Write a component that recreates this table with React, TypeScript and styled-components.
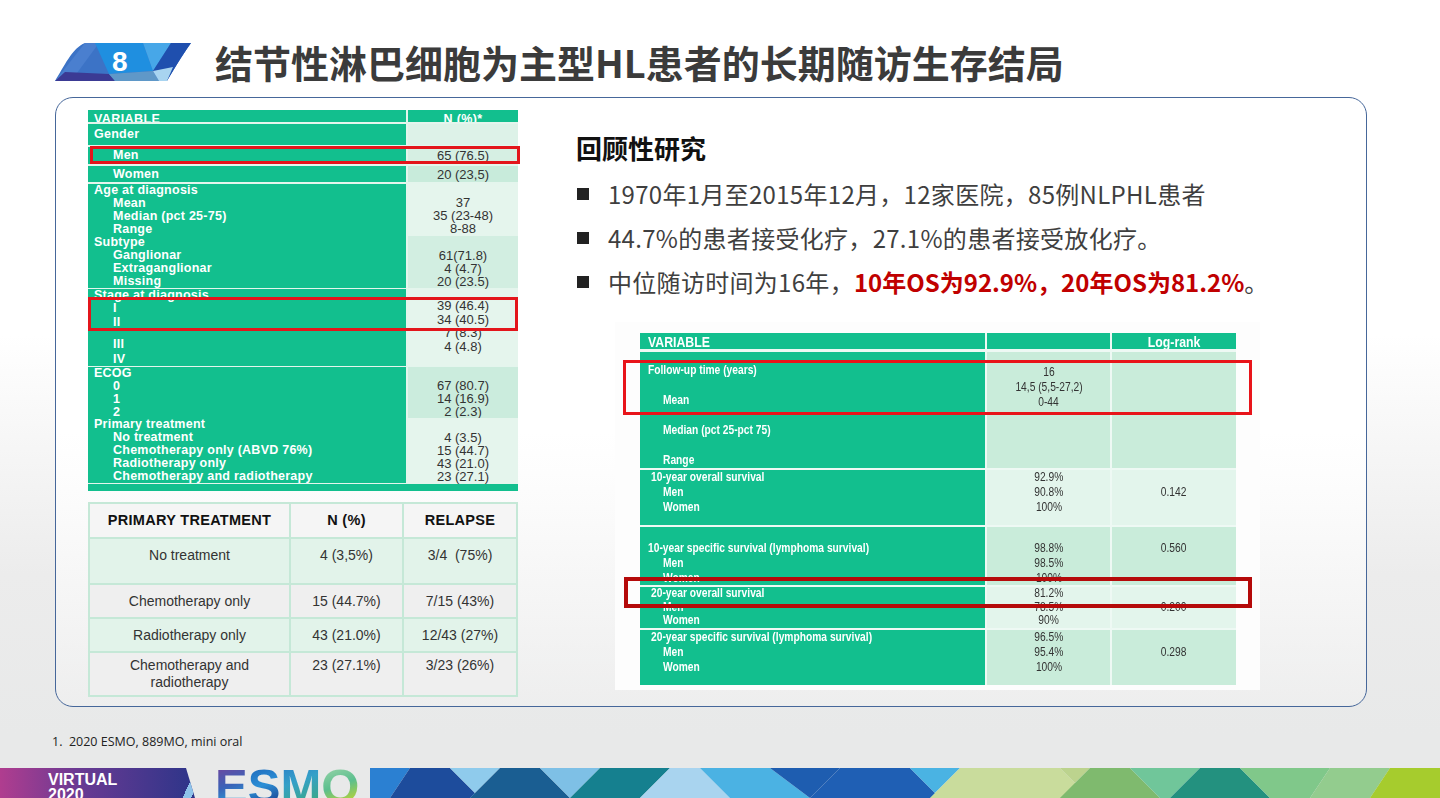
import React from "react";
import styled, { createGlobalStyle } from "styled-components";

const cjk = `"Noto Sans CJK SC", "Noto Sans", sans-serif`;
const arial = `"Liberation Sans", Arial, sans-serif`;
const green = "#12bf8e";

const GlobalStyle = createGlobalStyle`
  html, body { margin: 0; padding: 0; }
  body { font-family: ${cjk}; }
`;

const Page = styled.div`
  width: 1440px;
  height: 798px;
  overflow: hidden;
  display: flex;
  flex-direction: column;
  background: linear-gradient(180deg, #ffffff 0%, #ffffff 42%, #ececec 72%, #e8e9e9 92%);
`;

/* ---------- header ---------- */

const Header = styled.header`
  display: flex;
  align-items: center;
  gap: 23px;
  height: 97px;
  box-sizing: border-box;
  padding: 26px 0 0 55px;
`;

const Badge = styled.div`
  position: relative;
  width: 137px;
  height: 38px;
  display: flex;
  align-items: center;
`;

const BadgeArt = styled.svg`
  position: absolute;
  inset: 0;
`;

const BadgeNum = styled.span`
  position: relative;
  margin-left: 57px;
  font: bold 28px/1 ${arial};
  color: #fff;
`;

const Title = styled.h1`
  margin: 0;
  font: bold 38px/1 ${cjk};
  color: #3b3b3b;
`;

/* ---------- card ---------- */

const Card = styled.section`
  margin-left: 55px;
  width: 1312px;
  height: 610px;
  box-sizing: border-box;
  border: 1px solid #46679a;
  border-radius: 18px;
  background: linear-gradient(180deg, #ffffff 0%, #ffffff 55%, rgba(240, 240, 240, 0.7) 100%);
  display: flex;
  padding: 12px 0 0 32px;
`;

const LeftCol = styled.div`
  width: 430px;
  display: flex;
  flex-direction: column;
  gap: 11px;
`;

/* left stats table */

const StatTable = styled.div`
  position: relative;
  width: 430px;
  display: flex;
  flex-direction: column;
  gap: 2px;
  background: #e4f5ed;
`;

const StatRow = styled.div<{ $h: number; $clip?: boolean }>`
  display: grid;
  grid-template-columns: 318px 110px;
  column-gap: 2px;
  height: ${(p) => p.$h}px;
  overflow: ${(p) => (p.$clip ? "hidden" : "visible")};
`;

const StatHeadCell = styled.div<{ $center?: boolean }>`
  background: ${green};
  color: #fff;
  font: bold 12.5px/15px ${arial};
  letter-spacing: 0.4px;
  padding: 2px 0 0 ${(p) => (p.$center ? 0 : 6)}px;
  text-align: ${(p) => (p.$center ? "center" : "left")};
`;

const StatLabelCell = styled.div<{ $pad: number }>`
  background: ${green};
  color: #fff;
  font: bold 12.5px ${arial};
  letter-spacing: 0.25px;
  padding: ${(p) => p.$pad}px 0 0 6px;
`;

const StatValueCell = styled.div<{ $bg: string; $pad: number }>`
  background: ${(p) => p.$bg};
  color: #333;
  font: 13px ${arial};
  text-align: center;
  padding-top: ${(p) => p.$pad}px;
`;

const StatLine = styled.div<{ $ind?: number; $mt?: number }>`
  line-height: 13px;
  height: 13px;
  white-space: nowrap;
  padding-left: ${(p) => p.$ind || 0}px;
  margin-top: ${(p) => p.$mt || 0}px;
`;

const StatFoot = styled.div`
  height: 7px;
  background: ${green};
`;

const Highlight = styled.div<{ $top: number; $left: number; $w: number; $h: number; $c: string; $bw: number }>`
  position: absolute;
  top: ${(p) => p.$top}px;
  left: ${(p) => p.$left}px;
  width: ${(p) => p.$w}px;
  height: ${(p) => p.$h}px;
  box-sizing: border-box;
  border: ${(p) => p.$bw}px solid ${(p) => p.$c};
  pointer-events: none;
`;

/* treatment table */

const TreatTable = styled.div`
  display: grid;
  grid-template-columns: 199px 111px 112px;
  gap: 2px;
  padding: 2px;
  background: #c5e8d7;
`;

const TreatCell = styled.div<{ $bg: string; $h: number; $top?: number; $head?: boolean }>`
  height: ${(p) => p.$h}px;
  box-sizing: border-box;
  background: ${(p) => p.$bg};
  display: flex;
  flex-direction: column;
  align-items: center;
  justify-content: ${(p) => (p.$top !== undefined ? "flex-start" : "center")};
  padding-top: ${(p) => p.$top || 0}px;
  text-align: center;
  font: ${(p) => (p.$head ? "bold 14.5px" : "14px")} / 17px ${arial};
  color: ${(p) => (p.$head ? "#111" : "#333")};
  letter-spacing: ${(p) => (p.$head ? "0.3px" : "0")};
  white-space: pre;
`;

/* right column */

const RightCol = styled.div`
  margin-left: 58px;
  display: flex;
  flex-direction: column;
`;

const Heading = styled.h2`
  margin: 20px 0 0;
  font: bold 26px/36px ${cjk};
  color: #111;
`;

const Bullets = styled.ul`
  list-style: none;
  margin: 6px 0 0;
  padding: 0;
`;

const Bullet = styled.li`
  display: flex;
  align-items: center;
  height: 44px;
  font: 24px/44px ${cjk};
  letter-spacing: 0.3px;
  color: #3f3f3f;
  white-space: nowrap;
`;

const Square = styled.span`
  width: 12px;
  height: 12px;
  background: #222;
  margin: 0 19px 0 1px;
  flex: none;
`;

const Red = styled.b`
  color: #c00000;
  font-weight: bold;
  letter-spacing: 0;
`;

const Figure = styled.div`
  margin: 18px 0 0 39px;
  width: 645px;
  box-sizing: border-box;
  padding: 11px 24px 5px 25px;
  background: #fdfdfd;
`;

const SurvTable = styled.div`
  position: relative;
  width: 596px;
  display: flex;
  flex-direction: column;
  gap: 2px;
  background: #eef9f4;
`;

const SurvRow = styled.div<{ $h: number; $gapBelow?: number }>`
  display: grid;
  grid-template-columns: 345px 123px 124px;
  column-gap: 2px;
  height: ${(p) => p.$h}px;
  margin-bottom: ${(p) => p.$gapBelow || 0}px;
  overflow: hidden;
`;

const SurvHeadCell = styled.div<{ $center?: boolean }>`
  background: ${green};
  color: #fff;
  font: bold 15px/18px ${arial};
  padding-left: ${(p) => (p.$center ? 0 : 8)}px;
  text-align: ${(p) => (p.$center ? "center" : "left")};
`;

const SurvLabelCell = styled.div<{ $pad: number; $lh: number }>`
  background: ${green};
  color: #fff;
  font: bold 12.5px/${(p) => p.$lh}px ${arial};
  padding-top: ${(p) => p.$pad}px;
`;

const SurvValueCell = styled.div<{ $bg: string; $pad: number; $lh: number }>`
  background: ${(p) => p.$bg};
  color: #333;
  font: 12.5px/${(p) => p.$lh}px ${arial};
  text-align: center;
  padding-top: ${(p) => p.$pad}px;
`;

const SurvLine = styled.div<{ $ind?: number }>`
  white-space: nowrap;
  padding-left: ${(p) => p.$ind || 0}px;
  min-height: 1em;
`;

/* Arial Narrow look: squeeze regular Liberation Sans horizontally */
const Narrow = styled.span<{ $origin?: string }>`
  display: inline-block;
  transform: scaleX(0.82);
  transform-origin: ${(p) => p.$origin || "left"} center;
`;

/* footer */

const FootNote = styled.div`
  height: 61px;
  box-sizing: border-box;
  padding: 26px 0 0 52px;
  font: 12.5px/18px "Open Sans", ${arial};
  color: #222;
  white-space: pre;
`;

const Band = styled.footer`
  height: 30px;
  display: flex;
  overflow: hidden;
`;

const Virtual = styled.div`
  width: 195px;
  flex: none;
  box-sizing: border-box;
  padding: 4px 0 0 48px;
  background:
    linear-gradient(115deg, transparent 0 178px, #8fc3ea 178px 186px, transparent 186px),
    linear-gradient(90deg, #b03d8f 0%, #6a3a93 40%, #2d3589 100%);
  clip-path: polygon(0 0, 186px 0, 195px 100%, 0 100%);
  color: #fff;
  font: bold 16px/15px ${arial};
`;

const Logo = styled.div`
  width: 175px;
  flex: none;
  display: flex;
  padding-left: 20px;
  box-sizing: border-box;
  font: bold 49px/1 ${arial};
  margin-top: -6px;
`;

const LogoLetter = styled.span<{ $g: string }>`
  background: ${(p) => p.$g};
  -webkit-background-clip: text;
  background-clip: text;
  color: transparent;
`;

const Stripes = styled.svg`
  flex: 1;
  height: 30px;
  display: block;
`;

/* ---------- data ---------- */

type Line = { t: string; ind?: number; mt?: number };

const S = 19;
const stat: { h: number; bg: string; pad: number; vpad: number; labels: Line[]; values: Line[] }[] = [
  { h: 21, bg: "#ddf2e8", pad: 4, vpad: 0, labels: [{ t: "Gender" }], values: [] },
  { h: 17, bg: "#d6efe3", pad: 2, vpad: 2, labels: [{ t: "Men", ind: S }], values: [{ t: "65 (76.5)" }] },
  { h: 16, bg: "#c8ebdb", pad: 1.5, vpad: 1.5, labels: [{ t: "Women", ind: S }], values: [{ t: "20 (23,5)" }] },
  {
    h: 50, bg: "#e5f5ed", pad: 0, vpad: 12,
    labels: [{ t: "Age at diagnosis" }, { t: "Mean", ind: S }, { t: "Median (pct 25-75)", ind: S }, { t: "Range", ind: S }],
    values: [{ t: "37" }, { t: "35 (23-48)" }, { t: "8-88" }],
  },
  {
    h: 51, bg: "#d2eee1", pad: 0, vpad: 13,
    labels: [{ t: "Subtype" }, { t: "Ganglionar", ind: S }, { t: "Extraganglionar", ind: S }, { t: "Missing", ind: S }],
    values: [{ t: "61(71.8)" }, { t: "4 (4.7)" }, { t: "20 (23.5)" }],
  },
  {
    h: 76, bg: "#e5f5ed", pad: 0, vpad: 10,
    labels: [
      { t: "Stage at diagnosis" },
      { t: "I", ind: S },
      { t: "II", ind: S, mt: 1 },
      { t: "III", ind: S, mt: 9 },
      { t: "IV", ind: S, mt: 2 },
    ],
    values: [{ t: "39 (46.4)" }, { t: "34 (40.5)", mt: 1 }, { t: "7 (8.3)" }, { t: "4 (4.8)", mt: 1 }],
  },
  {
    h: 49, bg: "#cbecdd", pad: 0, vpad: 12,
    labels: [{ t: "ECOG" }, { t: "0", ind: S }, { t: "1", ind: S }, { t: "2", ind: S }],
    values: [{ t: "67 (80.7)" }, { t: "14 (16.9)" }, { t: "2 (2.3)" }],
  },
  {
    h: 64, bg: "#e5f5ed", pad: 0, vpad: 13,
    labels: [
      { t: "Primary treatment" },
      { t: "No treatment", ind: S },
      { t: "Chemotherapy only (ABVD 76%)", ind: S },
      { t: "Radiotherapy only", ind: S },
      { t: "Chemotherapy and radiotherapy", ind: S },
    ],
    values: [{ t: "4 (3.5)" }, { t: "15 (44.7)" }, { t: "43 (21.0)" }, { t: "23 (27.1)" }],
  },
];

const treat: { h: number; bg: string; top?: number; cells: string[][] }[] = [
  { h: 44, bg: "#e2f3ea", top: 8, cells: [["No treatment"], ["4 (3,5%)"], ["3/4  (75%)"]] },
  { h: 32, bg: "#efefef", cells: [["Chemotherapy only"], ["15 (44.7%)"], ["7/15 (43%)"]] },
  { h: 32, bg: "#e2f3ea", cells: [["Radiotherapy only"], ["43 (21.0%)"], ["12/43 (27%)"]] },
  { h: 42, bg: "#efefef", top: 4, cells: [["Chemotherapy and", "radiotherapy"], ["23 (27.1%)"], ["3/23 (26%)"]] },
];

const light = "#e3f5ec";
const mid = "#c9ecda";
const surv: { h: number; bg: string; pad: number; lh: number; vlh: number; vpad: number; labels: Line[]; values: string[]; log: string[] }[] = [
  {
    h: 116, bg: mid, pad: 3, lh: 30, vlh: 15, vpad: 13,
    labels: [
      { t: "Follow-up time (years)", ind: 8 },
      { t: "Mean", ind: 23 },
      { t: "Median (pct 25-pct 75)", ind: 23 },
      { t: "Range", ind: 23 },
    ],
    values: ["16", "14,5 (5,5-27,2)", "0-44"],
    log: [],
  },
  {
    h: 55, bg: light, pad: 0, lh: 15, vlh: 15, vpad: 0,
    labels: [{ t: "10-year overall survival", ind: 11 }, { t: "Men", ind: 23 }, { t: "Women", ind: 23 }],
    values: ["92.9%", "90.8%", "100%"],
    log: ["", "0.142"],
  },
  {
    h: 58, bg: mid, pad: 13.5, lh: 15, vlh: 15, vpad: 13.5,
    labels: [{ t: "10-year specific survival (lymphoma survival)", ind: 8 }, { t: "Men", ind: 23 }, { t: "Women", ind: 23 }],
    values: ["98.8%", "98.5%", "100%"],
    log: ["0.560"],
  },
  {
    h: 41, bg: light, pad: 0, lh: 13.5, vlh: 13.5, vpad: 0,
    labels: [{ t: "20-year overall survival", ind: 11 }, { t: "Men", ind: 23 }, { t: "Women", ind: 23 }],
    values: ["81.2%", "78.5%", "90%"],
    log: ["", "0.200"],
  },
  {
    h: 55, bg: mid, pad: 0, lh: 15, vlh: 15, vpad: 0,
    labels: [{ t: "20-year specific survival (lymphoma survival)", ind: 11 }, { t: "Men", ind: 23 }, { t: "Women", ind: 23 }],
    values: ["96.5%", "95.4%", "100%"],
    log: ["", "0.298"],
  },
];

const stripes: [number, number, string][] = [
  [0, 0, "#2b80d2"],
  [40, 20, "#1d4c9c"],
  [80, 110, "#8fcbec"],
  [130, 100, "#1a5e92"],
  [170, 200, "#7ec0e6"],
  [230, 200, "#15808f"],
  [300, 270, "#a9d4ef"],
  [330, 360, "#4bb2e3"],
  [400, 440, "#1e5db0"],
  [470, 440, "#1f5fb4"],
  [540, 570, "#4ab3e3"],
  [590, 560, "#c9dc9c"],
  [690, 720, "#bcd38e"],
  [720, 690, "#7fba6e"],
  [760, 790, "#70c69a"],
  [830, 800, "#23917f"],
  [870, 900, "#80c88a"],
  [960, 940, "#93cc8e"],
  [1020, 1000, "#a6cc2d"],
  [1070, 1070, ""],
];

const logoLetters: [string, string][] = [
  ["E", "linear-gradient(160deg, #7b3f98 0%, #3a63b8 60%, #2aa0d8 100%)"],
  ["S", "linear-gradient(160deg, #1a5fb4 0%, #2c8fd6 60%, #1e4f9c 100%)"],
  ["M", "linear-gradient(160deg, #2a7cc8 0%, #35a0c8 50%, #3aa88a 100%)"],
  ["O", "linear-gradient(160deg, #a9d9b0 0%, #5cbf8e 60%, #b4d23a 100%)"],
];

/* ---------- app ---------- */

const App: React.FC = () => (
  <Page>
    <GlobalStyle />
    <Header>
      <Badge>
        <BadgeArt width="137" height="38" viewBox="0 0 137 38">
          <defs>
            <clipPath id="badge-clip">
              <path d="M0,38 C9,24 17,5 30,0 L136,0 C126,14 118,28 112,38 Z" />
            </clipPath>
          </defs>
          <g clipPath="url(#badge-clip)">
            <rect width="137" height="38" fill="#3c73c6" />
            <polygon points="0,38 30,0 44,0 22,30" fill="#4a7fcf" />
            <polygon points="40,0 88,0 98,28 54,31" fill="#1f8fe0" />
            <polygon points="88,0 116,0 98,28" fill="#47a7e8" />
            <polygon points="116,0 137,0 112,38 98,28" fill="#1f4fae" />
            <polygon points="0,38 10,29 54,31 60,38" fill="#3b3a94" />
            <polygon points="54,31 98,28 104,38 60,38" fill="#5f98c8" />
            <polygon points="98,28 118,24 112,38 104,38" fill="#a8d4f0" />
          </g>
        </BadgeArt>
        <BadgeNum>8</BadgeNum>
      </Badge>
      <Title>结节性淋巴细胞为主型HL患者的长期随访生存结局</Title>
    </Header>

    <Card>
      <LeftCol>
        <StatTable>
          <StatRow $h={12} $clip>
            <StatHeadCell>VARIABLE</StatHeadCell>
            <StatHeadCell $center>N (%)*</StatHeadCell>
          </StatRow>
          {stat.map((g, i) => (
            <StatRow key={i} $h={g.h}>
              <StatLabelCell $pad={g.pad}>
                {g.labels.map((l, j) => (
                  <StatLine key={j} $ind={l.ind} $mt={l.mt}>
                    {l.t}
                  </StatLine>
                ))}
              </StatLabelCell>
              <StatValueCell $bg={g.bg} $pad={g.vpad}>
                {g.values.map((v, j) => (
                  <StatLine key={j} $mt={v.mt}>
                    {v.t}
                  </StatLine>
                ))}
              </StatValueCell>
            </StatRow>
          ))}
          <StatFoot />
          <Highlight $top={36} $left={2} $w={430} $h={18} $c="#e3151b" $bw={3} />
          <Highlight $top={187} $left={0} $w={430} $h={34} $c="#e3151b" $bw={3} />
        </StatTable>

        <TreatTable>
          <TreatCell $bg="#f5f5f5" $h={33} $head>PRIMARY TREATMENT</TreatCell>
          <TreatCell $bg="#f5f5f5" $h={33} $head>N (%)</TreatCell>
          <TreatCell $bg="#f5f5f5" $h={33} $head>RELAPSE</TreatCell>
          {treat.map((r, i) =>
            r.cells.map((c, j) => (
              <TreatCell key={`${i}-${j}`} $bg={r.bg} $h={r.h} $top={r.top}>
                {c.map((t, k) => (
                  <span key={k}>{t}</span>
                ))}
              </TreatCell>
            ))
          )}
        </TreatTable>
      </LeftCol>

      <RightCol>
        <Heading>回顾性研究</Heading>
        <Bullets>
          <Bullet>
            <Square />
            1970年1月至2015年12月，12家医院，85例NLPHL患者
          </Bullet>
          <Bullet>
            <Square />
            44.7%的患者接受化疗，27.1%的患者接受放化疗。
          </Bullet>
          <Bullet>
            <Square />
            中位随访时间为16年，<Red>10年OS为92.9%，20年OS为81.2%</Red>。
          </Bullet>
        </Bullets>

        <Figure>
          <SurvTable>
            <SurvRow $h={16} $gapBelow={1}>
              <SurvHeadCell>
                <Narrow>VARIABLE</Narrow>
              </SurvHeadCell>
              <SurvHeadCell />
              <SurvHeadCell $center>
                <Narrow $origin="center">Log-rank</Narrow>
              </SurvHeadCell>
            </SurvRow>
            {surv.map((g, i) => (
              <SurvRow key={i} $h={g.h}>
                <SurvLabelCell $pad={g.pad} $lh={g.lh}>
                  {g.labels.map((l, j) => (
                    <SurvLine key={j} $ind={l.ind}>
                      <Narrow>{l.t}</Narrow>
                    </SurvLine>
                  ))}
                </SurvLabelCell>
                <SurvValueCell $bg={g.bg} $pad={g.vpad} $lh={g.vlh}>
                  {g.values.map((v, j) => (
                    <SurvLine key={j}>
                      <Narrow $origin="center">{v}</Narrow>
                    </SurvLine>
                  ))}
                </SurvValueCell>
                <SurvValueCell $bg={g.bg} $pad={g.vpad} $lh={g.vlh}>
                  {g.log.map((v, j) => (
                    <SurvLine key={j}>
                      <Narrow $origin="center">{v}</Narrow>
                    </SurvLine>
                  ))}
                </SurvValueCell>
              </SurvRow>
            ))}
            <Highlight $top={27} $left={-17} $w={629} $h={55} $c="#e8141a" $bw={3.5} />
            <Highlight $top={244} $left={-16} $w={628} $h={31} $c="#b50a0a" $bw={4} />
          </SurvTable>
        </Figure>
      </RightCol>
    </Card>

    <FootNote>{"1.  2020 ESMO, 889MO, mini oral"}</FootNote>

    <Band>
      <Virtual>
        VIRTUAL
        <br />
        2020
      </Virtual>
      <Logo>
        {logoLetters.map(([l, g]) => (
          <LogoLetter key={l} $g={g}>
            {l}
          </LogoLetter>
        ))}
      </Logo>
      <Stripes viewBox="0 0 1070 30" preserveAspectRatio="none">
        {stripes.slice(0, -1).map(([t, b, c], i) => {
          const [nt, nb] = stripes[i + 1];
          return <polygon key={i} points={`${t},0 ${nt},0 ${nb},30 ${b},30`} fill={c} />;
        })}
      </Stripes>
    </Band>
  </Page>
);

export default App;
